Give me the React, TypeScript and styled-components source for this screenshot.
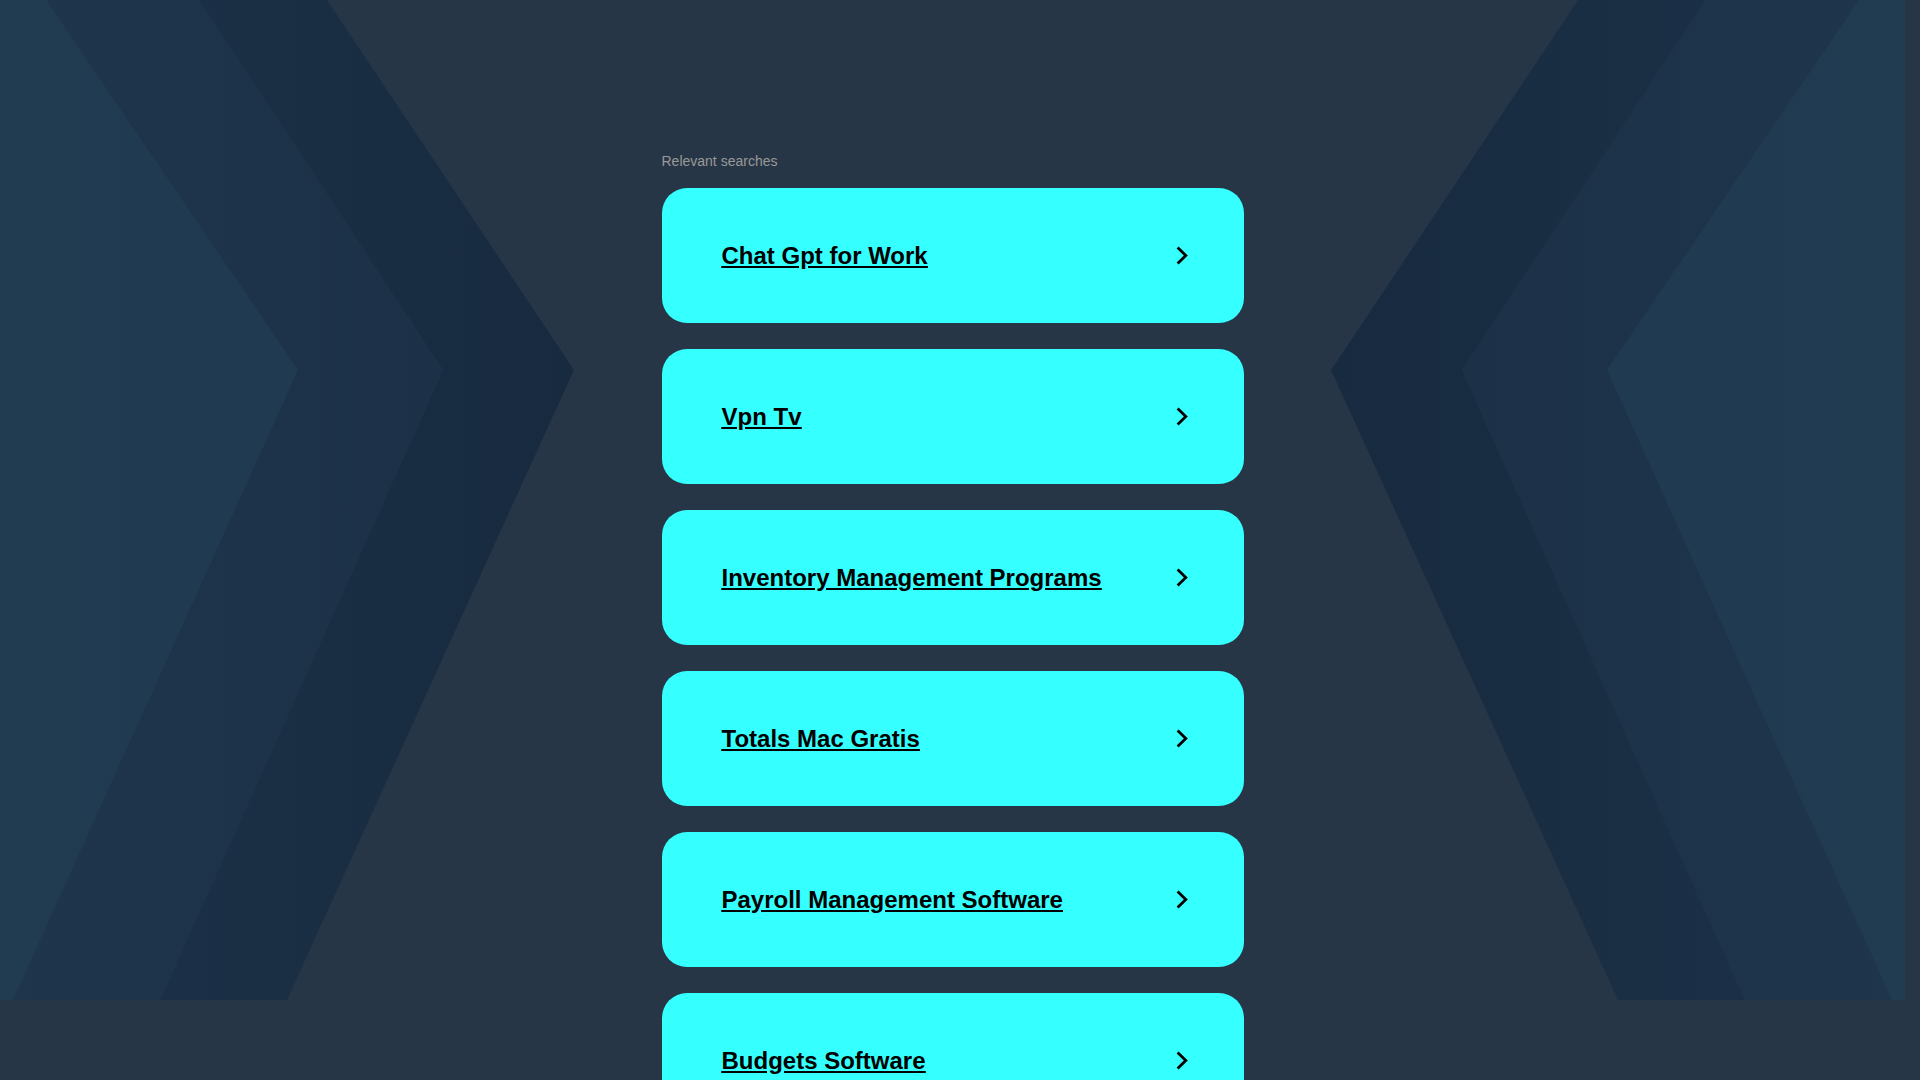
import * as React from 'react'
import styled, { createGlobalStyle } from 'styled-components'

const searches = [
  'Chat Gpt for Work',
  'Vpn Tv',
  'Inventory Management Programs',
  'Totals Mac Gratis',
  'Payroll Management Software',
  'Budgets Software',
]

// the reference page is laid out beside a 15px scrollbar
const GUTTER = 15

// chevron backdrop, left half; right half is the mirror image
const W = 1905
const bands = [
  { pts: [[0, 0], [46, 0], [298, 370], [13, 1000], [0, 1000]], from: '#213b51', to: '#1f3a51' },
  { pts: [[46, 0], [199, 0], [443, 370], [160, 1000], [13, 1000], [298, 370]], from: '#1e354b', to: '#1c3147' },
  { pts: [[199, 0], [327, 0], [574, 370], [287, 1000], [160, 1000], [443, 370]], from: '#1b3046', to: '#172a3f' },
]

function backdrop() {
  const defs: string[] = []
  const shapes: string[] = []
  bands.forEach((b, i) => {
    defs.push(
      `<linearGradient id="l${i}" x1="0" y1="0" x2="1" y2="0"><stop offset="0" stop-color="${b.from}"/><stop offset="1" stop-color="${b.to}"/></linearGradient>`,
      `<linearGradient id="r${i}" x1="1" y1="0" x2="0" y2="0"><stop offset="0" stop-color="${b.from}"/><stop offset="1" stop-color="${b.to}"/></linearGradient>`,
    )
    shapes.push(
      `<polygon fill="url(#l${i})" points="${b.pts.map(p => p.join(',')).join(' ')}"/>`,
      `<polygon fill="url(#r${i})" points="${b.pts.map(p => `${W - p[0]},${p[1]}`).join(' ')}"/>`,
    )
  })
  const svg = `<svg xmlns="http://www.w3.org/2000/svg" viewBox="0 0 ${W} 1000" preserveAspectRatio="none"><defs>${defs.join('')}</defs>${shapes.join('')}</svg>`
  return `url("data:image/svg+xml,${encodeURIComponent(svg)}")`
}

const GlobalStyle = createGlobalStyle`
  html, body {
    margin: 0;
    padding: 0;
  }
  body {
    background-color: #273646;
    background-image: ${backdrop()};
    background-repeat: no-repeat;
    background-position: left top;
    background-size: calc(100% - ${GUTTER}px) 1000px;
    font-family: 'Liberation Sans', Arial, sans-serif;
  }
`

export default function App() {
  return (
    <>
      <GlobalStyle />
      <Page>
        <Column>
          <Heading>Relevant searches</Heading>
          <List>
            {searches.map(term => (
              <SearchLink key={term} href='#'>
                <Term>{term}</Term>
                <Arrow viewBox='0 0 12 19' width='12' height='19'>
                  <polyline points='1.6,1.6 9.8,9.5 1.6,17.4' fill='none' stroke='#000' strokeWidth='2.8' />
                </Arrow>
              </SearchLink>
            ))}
          </List>
        </Column>
      </Page>
    </>
  )
}

const Page = styled.main`
  padding: 153px ${GUTTER}px 270px 0;
`
const Column = styled.section`
  width: 582px;
  margin: 0 auto;
`
const Heading = styled.h2`
  margin: 0 0 19px;
  font-size: 14px;
  line-height: 16px;
  font-weight: normal;
  color: #999;
`
const List = styled.div`
  display: flex;
  flex-direction: column;
  gap: 26px;
`
const SearchLink = styled.a`
  display: flex;
  align-items: center;
  justify-content: space-between;
  height: 135px;
  padding: 0 56px 0 60px;
  box-sizing: border-box;
  border-radius: 25px;
  background: #36ffff;
  color: #000;
`
const Term = styled.span`
  font-size: 24px;
  font-weight: bold;
  text-decoration: underline;
`
const Arrow = styled.svg`
  flex: none;
`
